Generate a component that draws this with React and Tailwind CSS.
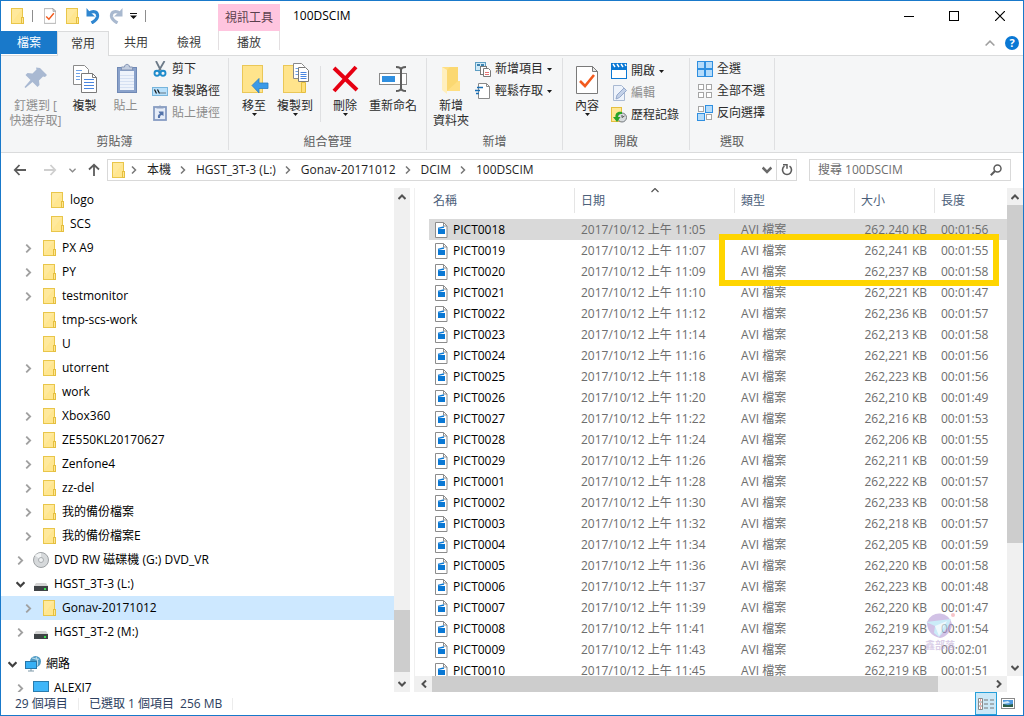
import React, { useState } from "react";

const FolderIcon = ({ className = "w-4 h-4" }) => (
  <svg className={className} viewBox="0 0 16 16" fill="none">
    <rect x="2.5" y="0.5" width="11" height="15" fill="#ffe68f" stroke="#e9c64a" />
    <path d="M3 1h10L3 14z" fill="#ffedb0" opacity=".4" />
    <rect x="12.5" y="9.5" width="2" height="6" fill="#ffe794" stroke="#e5bf3f" />
  </svg>
);

const PropsIcon = ({ className }) => (
  <svg className={className} viewBox="0 0 22 28" fill="none">
    <path d="M.5.5h16l5 5v22H.5z" fill="#fff" stroke="#7a7a7a" />
    <path d="M16.5.5v5h5z" fill="#e8e8e8" stroke="#7a7a7a" />
    <path d="M4 15l5 5 9-11" stroke="#f25a1d" strokeWidth="2.6" />
  </svg>
);

const UndoIcon = ({ color, flip }) => (
  <svg
    className={flip ? "w-4 h-4 -scale-x-100" : "w-4 h-4"}
    viewBox="0 0 16 16"
    fill="none"
  >
    <path d="M4 5C9 2 13 4 12.500 8.500 12 11.500 10 13 6.500 15" stroke={color} strokeWidth="3.2" />
    <path d="M1.500 0v8.500H10L7 5.800 4.500 3.500z" fill={color} />
  </svg>
);

const Chevron = ({ dir = "right", color = "#a0a0a0", width = 2, className = "w-2 h-2" }) => {
  const paths = {
    right: "M2 0.5L5.500 4 2 7.500",
    left: "M6 0.5L2.500 4 6 7.500",
    down: "M0.500 2L4 5.500 7.500 2",
    up: "M0.500 6L4 2.500 7.500 6",
  };
  return (
    <svg className={className} viewBox="0 0 8 8" fill="none">
      <path d={paths[dir]} stroke={color} strokeWidth={width} />
    </svg>
  );
};

const Arrow = ({ dir, color }) => {
  const paths = {
    left: "M13 7H2M6.500 2L1.800 7l4.700 5",
    right: "M1 7h11M7.500 2l4.700 5-4.700 5",
    up: "M7 13V2M2 6.500L7 1.800l5 4.700",
  };
  return (
    <svg className="w-3.5 h-3.5" viewBox="0 0 14 14" fill="none">
      <path d={paths[dir]} stroke={color} strokeWidth="1.8" />
    </svg>
  );
};

const Caret = () => (
  <svg className="w-[5px] h-[3px]" viewBox="0 0 5 3">
    <path d="M0 0h5L2.500 3z" fill="#1a1a1a" />
  </svg>
);

const PinIcon = () => (
  <svg className="w-8 h-8" viewBox="0 0 32 32">
    <path
      d="M20 5l7 7-2 2-2-.5-4 4 .5 4.500-2 2-5-5-7 6-1-1 6-7-5-5 2-2 5 .5 4-4-.5-2z"
      transform="translate(0 1)"
      fill="#a9b9d2"
    />
  </svg>
);

const CopyIcon = () => (
  <svg className="w-8 h-8" viewBox="0 0 32 32" fill="none">
    <path d="M4.500 3.500h11l4 4v15h-15z" fill="#fff" stroke="#8a8a8a" />
    <path d="M7 8.500h6M7 11.500h4M7 14.500h4M7 17.500h4" stroke="#6fa3e8" />
    <path d="M12.500 11.500h11l4 4v15h-15z" fill="#fff" stroke="#7a7a7a" />
    <path d="M23.500 11.500v4h4" stroke="#7a7a7a" />
    <path d="M15 17.500h10M15 20.500h10M15 23.500h10M15 26.500h10" stroke="#4a86e0" />
  </svg>
);

const PasteIcon = () => (
  <svg className="w-8 h-8" viewBox="0 0 32 32" fill="none">
    <rect x="7.500" y="5.500" width="19" height="25" fill="#8aa2cb" stroke="#7089b5" />
    <rect x="10" y="9" width="14" height="19" fill="#eef3fb" />
    <path d="M10 13.500h14M10 16.500h14M10 19.500h14M10 22.500h14M10 25.500h14" stroke="#d5e0f2" />
    <path d="M11.500 8V5h3c0-3.500 5-3.500 5 0h3v3z" fill="#c3cee0" stroke="#8495b5" />
  </svg>
);

const ScissorsIcon = () => (
  <svg className="w-4 h-4" viewBox="0 0 16 16" fill="none">
    <path d="M4 0l4.800 9.500M12.500 0L7 9.500" stroke="#6c7a88" strokeWidth="1.800" />
    <circle cx="5" cy="12.300" r="2.500" stroke="#1e8bcb" strokeWidth="1.900" />
    <circle cx="11" cy="12.300" r="2.500" stroke="#1e8bcb" strokeWidth="1.900" />
  </svg>
);

const CopyPathIcon = () => (
  <svg className="w-4 h-4" viewBox="0 0 16 16" fill="none">
    <rect x=".5" y="4.500" width="15" height="8" fill="#b8e0fb" stroke="#77b5dc" />
    <path d="M2.500 6.500l2 4M5.500 6.500l2 4" stroke="#111" strokeWidth="1.200" />
    <path d="M8.500 10h1M10.500 10h1M12.500 10h1" stroke="#111" strokeWidth="1.200" />
  </svg>
);

const PasteLinkIcon = () => (
  <svg className="w-4 h-4" viewBox="0 0 16 16" fill="none">
    <rect x="2" y="2" width="12" height="13" fill="#e6edf8" stroke="#879cc2" strokeWidth="1.800" />
    <path d="M4.500 3.500V1.500h2C7 0 9 0 9.500 1.500h2v2z" fill="#8fa1c2" />
    <path d="M6 13c-.5-3 .5-4 2-4L6.500 6.500h5V11L10 10c-1.500 0-2 1-2 3z" fill="#5574aa" />
  </svg>
);

const MoveToIcon = () => (
  <svg className="w-8 h-8" viewBox="0 0 32 32">
    <rect x="4.500" y="3.500" width="20" height="27" fill="#ffe48c" stroke="#eac758" />
    <path d="M14 23.500l7-7v4.500h9v5.500h-9v4.500z" fill="#3b9ae8" stroke="#2a7dc4" strokeWidth=".8" />
  </svg>
);

const CopyToIcon = () => (
  <svg className="w-8 h-8" viewBox="0 0 32 32" fill="none">
    <rect x="4.500" y="3.500" width="20" height="27" fill="#ffe48c" stroke="#eac758" />
    <path d="M22.500 20.500h4v10h-4z" fill="#ffdf76" stroke="#e5bf3f" />
    <path d="M14.500 1.500h8l3 3v12h-11z" fill="#fff" stroke="#8a8a8a" />
    <path d="M16.500 6.500h3M16.500 9.500h3M16.500 12.500h3" stroke="#6fa3e8" />
    <path d="M19.500 5.500h7l3 3v11h-10z" fill="#fff" stroke="#7a7a7a" />
    <path d="M21.500 10.500h6M21.500 12.500h6M21.500 14.500h6M21.500 16.500h6" stroke="#4a86e0" />
  </svg>
);

const DeleteIcon = () => (
  <svg className="w-8 h-8" viewBox="0 0 32 32" fill="none">
    <path d="M5 6l23 22M27 5L5 29" stroke="#e60012" strokeWidth="4" />
  </svg>
);

const RenameIcon = () => (
  <svg className="w-8 h-8" viewBox="0 0 32 32" fill="none">
    <rect x="2.500" y="11.500" width="27" height="11" fill="#fff" stroke="#8a8a8a" />
    <rect x="5" y="14" width="13" height="6" fill="#2f8fe0" />
    <path d="M19 5c3 0 5 1 5 3 0-2 2-3 5-3M24 7v20M19 29c3 0 5-1 5-3 0 2 2 3 5 3" stroke="#5e5e5e" strokeWidth="2" />
  </svg>
);

const NewFolderIcon = () => (
  <svg className="w-8 h-8" viewBox="0 0 32 32">
    <path d="M7 5h16v14h2v10H9z" fill="#ffdf82" />
    <path d="M7 5l5 3v24l-5-4z" fill="#ffefbd" />
    <path d="M12 8l3-3h8v14l-11 10z" fill="#fbd871" />
  </svg>
);

const NewItemIcon = () => (
  <svg className="w-4 h-4" viewBox="0 0 16 16" fill="none">
    <rect x=".5" y="1.500" width="10" height="8" fill="#cfeaf8" stroke="#5e9fc4" />
    <path d="M2 4h3M6 4h3" stroke="#3b82b0" strokeWidth="2" />
    <rect x="5.500" y="5.500" width="6" height="8" fill="#fff" stroke="#7a7a7a" />
    <path d="M8.500 7.500h5l2 2v6h-7z" fill="#fff" stroke="#7a7a7a" />
    <path d="M10 11.500h4M10 13.500h4" stroke="#e57373" />
  </svg>
);

const EasyAccessIcon = () => (
  <svg className="w-4 h-4" viewBox="0 0 16 16" fill="none">
    <path d="M3.500.5h8l3 3v12h-11z" fill="#fff" stroke="#8a8a8a" />
    <path d="M11.500.5v3h3" stroke="#8a8a8a" />
    <path d="M2 4.500h6M0 7.500h5M1 10.500h3" stroke="#1a6fb5" strokeWidth="1.400" />
  </svg>
);

const OpenIcon = () => (
  <svg className="w-4 h-4" viewBox="0 0 16 16" fill="none">
    <rect x=".5" y="5.500" width="15" height="10" fill="#fff" stroke="#0a78d4" />
    <path d="M0 0h16v7H0z" fill="#0a78d4" />
    <path d="M2 1l2 3M6 1l2 3M10 1l2 3M14 1l1 2" stroke="#fff" strokeWidth="1.400" />
  </svg>
);

const EditIcon = () => (
  <svg className="w-4 h-4" viewBox="0 0 16 16" fill="none">
    <path d="M2.500.5h8l3 3v12h-11z" fill="#eef3fb" stroke="#a9b9d2" />
    <path d="M5 14l1-4 7-7 2.500 2.500-7 7z" fill="#c3d1e8" stroke="#94a8cb" />
  </svg>
);

const HistoryIcon = () => (
  <svg className="w-4 h-4" viewBox="0 0 16 16" fill="none">
    <rect x=".5" y=".5" width="10" height="14" fill="#ffe794" stroke="#e5bf3f" />
    <circle cx="11" cy="10.500" r="4.500" fill="#d8dcdf" stroke="#757b80" />
    <path d="M11 8v2.500l2.500-1.500" stroke="#555" />
    <path d="M11 5C6 4 4 7 4.500 10H2l4 5 3.500-5H7c0-2 1-3.500 4-3z" fill="#28a428" />
  </svg>
);

const SelectGrid = ({ filled }) => (
  <svg className="w-4 h-4" viewBox="0 0 16 16">
    {[[0, 0], [1, 0], [0, 1], [1, 1]].map(([x, y], i) => (
      <rect
        key={i}
        x={x * 8 + (filled[i] ? 0.5 : 1.5)}
        y={y * 8 + (filled[i] ? 0.5 : 1.5)}
        width={filled[i] ? 7 : 5}
        height={filled[i] ? 7 : 5}
        fill={filled[i] ? "#b5dcfb" : "#fff"}
        stroke={filled[i] ? "#2f8fe0" : "#a5a5a5"}
      />
    ))}
  </svg>
);

const DiscIcon = () => (
  <svg className="w-4 h-4" viewBox="0 0 16 16" fill="none">
    <circle cx="8" cy="8" r="7.500" fill="#d6d9db" stroke="#9da1a4" />
    <path d="M8 8L2 3.500A7.500 7.500 0 0 1 8 1z" fill="#f2f4f5" />
    <circle cx="8" cy="8" r="2.500" fill="#eef0f1" stroke="#a9adb0" />
  </svg>
);

const DriveIcon = () => (
  <svg className="w-4 h-4" viewBox="0 0 16 16">
    <path d="M3 7h10l2 3H1z" fill="#d4d4d4" />
    <rect x="1" y="10" width="14" height="5" fill="#3f4346" />
    <rect x="11" y="12" width="2" height="2" fill="#35e04a" />
  </svg>
);

const NetworkIcon = () => (
  <svg className="w-4 h-4" viewBox="0 0 16 16" fill="none">
    <circle cx="10.500" cy="5.500" r="5.500" fill="#4f9ac4" />
    <path d="M7 2c3 0 4 2 7 1M11 1c2 3 2 6 1 9" stroke="#b8dcec" strokeWidth="1.200" />
    <rect x=".5" y="5.500" width="11" height="7" fill="#37b0f5" stroke="#2876a8" />
    <path d="M3 15h6M6 13v2" stroke="#7c98a8" />
  </svg>
);

const MonitorIcon = () => (
  <svg className="w-4 h-4" viewBox="0 0 16 16">
    <rect x=".5" y="1.500" width="15" height="10" fill="#3fb6f9" stroke="#2a7cae" />
    <path d="M6 12h4v2H6z" fill="#9db0bb" />
  </svg>
);

const VideoFileIcon = () => (
  <svg className="w-[13px] h-4 shrink-0" viewBox="0 0 13 16" fill="none">
    <path d="M.5.5h8l3.500 3.500v11.500H.5z" fill="#fff" stroke="#8c8c8c" />
    <path d="M8.500.5V4H12" stroke="#8c8c8c" />
    <rect x="3" y="7" width="7" height="5" fill="#0a78d4" />
    <path d="M3 6.300l6-1.300" stroke="#0a78d4" strokeWidth="1.300" />
  </svg>
);

const BigButton = ({ icon, lines, caret, disabled, className }) => (
  <button
    type="button"
    disabled={disabled}
    className={`flex flex-col items-center shrink-0 pt-1 leading-4 whitespace-nowrap ${
      disabled ? "text-[#8d8d8d]" : "text-[#2b2b2b]"
    } ${className}`}
  >
    {icon}
    <span className="mt-1">
      {lines.map((line) => (
        <span key={line} className="block h-[15px]">
          {line}
        </span>
      ))}
    </span>
    {caret && <Caret />}
  </button>
);

const SmallButton = ({ icon, label, caret, disabled }) => (
  <button
    type="button"
    disabled={disabled}
    className={`flex items-center gap-1 h-[22px] whitespace-nowrap ${
      disabled ? "text-[#8d8d8d]" : "text-[#2b2b2b]"
    }`}
  >
    {icon}
    <span>{label}</span>
    {caret && <Caret />}
  </button>
);

const RibbonGroup = ({ label, className, children }) => (
  <section
    className={`flex flex-col shrink-0 my-0.5 border-r border-[#dfe0e2] ${className}`}
  >
    <div className="flex flex-1 items-start">{children}</div>
    <h2 className="h-4 text-center leading-4 text-[#5c5c5c]">{label}</h2>
  </section>
);

const tree = [
  { level: 3, name: "logo", leaf: true },
  { level: 3, name: "SCS", leaf: true },
  { level: 2, name: "PX A9" },
  { level: 2, name: "PY" },
  { level: 2, name: "testmonitor" },
  { level: 2, name: "tmp-scs-work", leaf: true },
  { level: 2, name: "U", leaf: true },
  { level: 2, name: "utorrent" },
  { level: 2, name: "work", leaf: true },
  { level: 2, name: "Xbox360" },
  { level: 2, name: "ZE550KL20170627" },
  { level: 2, name: "Zenfone4" },
  { level: 2, name: "zz-del" },
  { level: 2, name: "我的備份檔案" },
  { level: 2, name: "我的備份檔案E" },
  { level: 1, name: "DVD RW 磁碟機 (G:) DVD_VR", icon: <DiscIcon /> },
  { level: 1, name: "HGST_3T-3 (L:)", icon: <DriveIcon />, open: true },
  { level: 2, name: "Gonav-20171012" },
  { level: 1, name: "HGST_3T-2 (M:)", icon: <DriveIcon /> },
  { level: 0, name: "網路", icon: <NetworkIcon />, open: true },
  { level: 1, name: "ALEXI7", icon: <MonitorIcon /> },
];

const indent = ["pl-[3px] mt-2", "pl-[11px]", "pl-[19px]", "pl-[27px]"];

const files = [
  ["PICT0018", "11:05", "262,240", "00:01:56"],
  ["PICT0019", "11:07", "262,241", "00:01:55"],
  ["PICT0020", "11:09", "262,237", "00:01:58"],
  ["PICT0021", "11:10", "262,221", "00:01:47"],
  ["PICT0022", "11:12", "262,236", "00:01:57"],
  ["PICT0023", "11:14", "262,213", "00:01:58"],
  ["PICT0024", "11:16", "262,221", "00:01:56"],
  ["PICT0025", "11:18", "262,223", "00:01:56"],
  ["PICT0026", "11:20", "262,210", "00:01:49"],
  ["PICT0027", "11:22", "262,216", "00:01:53"],
  ["PICT0028", "11:24", "262,206", "00:01:55"],
  ["PICT0029", "11:26", "262,211", "00:01:59"],
  ["PICT0001", "11:28", "262,222", "00:01:57"],
  ["PICT0002", "11:30", "262,233", "00:01:58"],
  ["PICT0003", "11:32", "262,218", "00:01:57"],
  ["PICT0004", "11:34", "262,205", "00:01:59"],
  ["PICT0005", "11:36", "262,220", "00:01:58"],
  ["PICT0006", "11:37", "262,223", "00:01:48"],
  ["PICT0007", "11:39", "262,220", "00:01:47"],
  ["PICT0008", "11:41", "262,219", "00:01:54"],
  ["PICT0009", "11:43", "262,237", "00:02:01"],
  ["PICT0010", "11:45", "262,219", "00:01:51"],
];

const TitleBar = () => (
  <header className="flex h-[30px] shrink-0">
    <div className="flex items-center w-[217px] pl-2">
      <FolderIcon />
      <span className="w-px h-3 ml-[7px] mr-[11px] bg-[#8d8d8d]" />
      <PropsIcon className="w-3 h-4" />
      <FolderIcon className="w-4 h-4 ml-2" />
      <button type="button" aria-label="復原" className="ml-[5px]">
        <UndoIcon color="#2f86d0" />
      </button>
      <button type="button" aria-label="取消復原" className="ml-[7px]">
        <UndoIcon color="#a9b9cf" flip />
      </button>
      <button type="button" aria-label="自訂快速存取工具列" className="ml-[6px]">
        <svg className="w-[7px] h-[6px]" viewBox="0 0 7 6">
          <path d="M0 0h7v1H0zM0 2.500h7L3.500 6z" fill="#111" />
        </svg>
      </button>
      <span className="w-px h-3 ml-2 bg-[#8d8d8d]" />
    </div>
    <div className="w-[62px] mt-[3px] pt-1.5 leading-4 text-center bg-[#ffc5df] text-[#5b3f4d]">
      視訊工具
    </div>
    <h1 className="flex-1 pl-[13px] leading-[30px] text-black">100DSCIM</h1>
    <div className="flex">
      <button type="button" aria-label="最小化" className="flex items-center justify-center w-[45px]">
        <span className="w-2.5 h-px bg-black" />
      </button>
      <button type="button" aria-label="最大化" className="flex items-center justify-center w-[45px]">
        <span className="w-2.5 h-2.5 border border-black" />
      </button>
      <button type="button" aria-label="關閉" className="flex items-center justify-center w-[47px]">
        <svg className="w-2.5 h-2.5" viewBox="0 0 10 10">
          <path d="M0 0l10 10M10 0L0 10" stroke="#000" strokeWidth="1.200" />
        </svg>
      </button>
    </div>
  </header>
);

const RibbonTabs = () => (
  <nav className="flex h-[25px] shrink-0 leading-4 text-[#3b3b3b] border-b border-[#dadbdc]">
    <button type="button" className="w-14 h-[23px] bg-[#1979ca] text-white">
      檔案
    </button>
    <button
      type="button"
      className="w-[52px] h-[25px] bg-[#f5f6f7] border border-b-0 border-[#dadbdc]"
    >
      常用
    </button>
    <button type="button" className="w-[54px]">
      共用
    </button>
    <button type="button" className="w-[52px] mr-[3px]">
      檢視
    </button>
    <button
      type="button"
      className="w-[62px] h-[19px] pt-1 border-x border-[#e3dfe1]"
    >
      播放
    </button>
    <div className="flex flex-1 items-center justify-end gap-2.5 pr-1">
      <button type="button" aria-label="最小化功能區" className="flex">
        <Chevron dir="up" width={1.3} className="w-2.5 h-2.5" />
      </button>
      <button
        type="button"
        aria-label="說明"
        className="w-3.5 h-3.5 rounded-full bg-[#0a78d4] text-white text-[11px] leading-[14px] font-bold"
      >
        ?
      </button>
    </div>
  </nav>
);

const Ribbon = () => (
  <div className="flex h-[97px] shrink-0 bg-[#f5f6f7] border-b border-[#dadbdc] overflow-hidden">
    <RibbonGroup label="剪貼簿" className="w-[228px]">
      <BigButton
        icon={<PinIcon />}
        lines={["釘選到 [", "快速存取]"]}
        disabled
        className="w-[69px]"
      />
      <BigButton icon={<CopyIcon />} lines={["複製"]} className="w-[29px]" />
      <BigButton icon={<PasteIcon />} lines={["貼上"]} disabled className="w-[53px]" />
      <div>
        <SmallButton icon={<ScissorsIcon />} label="剪下" />
        <SmallButton icon={<CopyPathIcon />} label="複製路徑" />
        <SmallButton icon={<PasteLinkIcon />} label="貼上捷徑" disabled />
      </div>
    </RibbonGroup>
    <RibbonGroup label="組合管理" className="w-[198px]">
      <BigButton icon={<MoveToIcon />} lines={["移至"]} caret className="w-8 ml-[9px]" />
      <BigButton icon={<CopyToIcon />} lines={["複製到"]} caret className="w-[50px]" />
      <span className="w-px h-14 mt-2 bg-[#dfe0e2]" />
      <BigButton icon={<DeleteIcon />} lines={["刪除"]} caret className="w-12" />
      <BigButton icon={<RenameIcon />} lines={["重新命名"]} className="w-12" />
    </RibbonGroup>
    <RibbonGroup label="新增" className="w-[136px]">
      <BigButton icon={<NewFolderIcon />} lines={["新增", "資料夾"]} className="w-12" />
      <div>
        <SmallButton icon={<NewItemIcon />} label="新增項目" caret />
        <SmallButton icon={<EasyAccessIcon />} label="輕鬆存取" caret />
      </div>
    </RibbonGroup>
    <RibbonGroup label="開啟" className="w-[127px]">
      <BigButton
        icon={
          <span className="flex items-end justify-center w-8 h-8">
            <PropsIcon className="w-[22px] h-7" />
          </span>
        }
        lines={["內容"]}
        caret
        className="w-12"
      />
      <div className="pt-0.5">
        <SmallButton icon={<OpenIcon />} label="開啟" caret />
        <SmallButton icon={<EditIcon />} label="編輯" disabled />
        <SmallButton icon={<HistoryIcon />} label="歷程記錄" />
      </div>
    </RibbonGroup>
    <RibbonGroup label="選取" className="w-[85px]">
      <div className="pl-[7px]">
        <SmallButton icon={<SelectGrid filled={[1, 1, 1, 1]} />} label="全選" />
        <SmallButton icon={<SelectGrid filled={[0, 0, 0, 0]} />} label="全部不選" />
        <SmallButton icon={<SelectGrid filled={[0, 1, 1, 0]} />} label="反向選擇" />
      </div>
    </RibbonGroup>
  </div>
);

const crumbs = ["本機", "HGST_3T-3 (L:)", "Gonav-20171012", "DCIM", "100DSCIM"];

const AddressBar = () => (
  <div className="flex items-center h-[35px] shrink-0 pl-3 pr-3 pb-px">
    <button type="button" aria-label="上一頁">
      <Arrow dir="left" color="#5c5c5c" />
    </button>
    <button type="button" aria-label="下一頁" className="ml-4">
      <Arrow dir="right" color="#cfcfcf" />
    </button>
    <button type="button" aria-label="最近的位置" className="ml-3">
      <Chevron dir="down" color="#8a8a8a" width={1.5} className="w-[7px] h-[7px]" />
    </button>
    <button type="button" aria-label="上移" className="ml-[11px]">
      <Arrow dir="up" color="#5c5c5c" />
    </button>
    <div className="flex flex-1 items-center h-[22px] ml-1.5 border border-[#d9d9d9] text-[#1f1f1f]">
      <FolderIcon className="w-4 h-4 ml-0.5" />
      <ol className="flex flex-1 items-center pl-1">
        {crumbs.map((name) => (
          <li key={name} className="flex items-center">
            <Chevron color="#777" width={1.5} className="w-2 h-2 mr-[9px]" />
            <a href="#" className="mr-2 whitespace-nowrap">
              {name}
            </a>
          </li>
        ))}
      </ol>
      <button type="button" aria-label="先前的位置" className="mr-1">
        <Chevron dir="down" color="#6a6a6a" className="w-2.5 h-2.5" />
      </button>
      <button
        type="button"
        aria-label="重新整理"
        className="flex items-center justify-center w-5 h-full border-l border-[#d9d9d9]"
      >
        <svg className="w-3 h-3" viewBox="0 0 12 12" fill="none">
          <path d="M8.500 2.200a4.500 4.500 0 1 1-5 0" stroke="#5c5c5c" strokeWidth="1.600" />
          <path d="M2 .8h4v4" stroke="#5c5c5c" strokeWidth="1.500" />
        </svg>
      </button>
    </div>
    <label className="flex items-center w-[202px] h-[22px] ml-3 pl-2 pr-2 border border-[#d9d9d9]">
      <input
        type="search"
        aria-label="搜尋"
        placeholder="搜尋 100DSCIM"
        className="flex-1 min-w-0 outline-none placeholder:text-[#6d6d6d]"
      />
      <svg className="w-3 h-3" viewBox="0 0 12 12" fill="none">
        <circle cx="7.500" cy="4.500" r="3.500" stroke="#5c5c5c" strokeWidth="1.500" />
        <path d="M5 7L.8 11.200" stroke="#5c5c5c" strokeWidth="2" />
      </svg>
    </label>
  </div>
);

const NavTree = ({ selected, onSelect }) => (
  <aside className="flex w-[409px] shrink-0">
    <ul className="flex-1 overflow-hidden text-black">
      {tree.map((item) => (
        <li key={item.name}>
          <button
            type="button"
            onClick={() => onSelect(item.name)}
            className={`flex items-center gap-[5px] w-full h-6 whitespace-nowrap ${
              indent[item.level]
            } ${selected === item.name ? "bg-[#cde8ff]" : ""}`}
          >
            <span className="flex justify-center w-4">
              {!item.leaf && (
                <Chevron
                  dir={item.open ? "down" : "right"}
                  color={item.open ? "#404040" : "#a0a0a0"}
                  width={item.open ? 2 : 1.6}
                  className="w-[9px] h-[9px]"
                />
              )}
            </span>
            {item.icon || <FolderIcon />}
            <span>{item.name}</span>
          </button>
        </li>
      ))}
    </ul>
    <div className="flex flex-col items-center w-4 bg-[#f0f0f0]">
      <span className="flex items-center h-[17px]">
        <Chevron dir="up" color="#505050" />
      </span>
      <span className="flex-1" />
      <span className="w-full h-[62px] bg-[#cdcdcd]" />
      <span className="flex items-center h-5 pt-1">
        <Chevron dir="down" color="#505050" />
      </span>
    </div>
  </aside>
);

const Watermark = () => (
  <div className="absolute top-[424px] right-[49px] flex flex-col items-center opacity-60">
    <svg className="w-9 h-7" viewBox="0 0 36 28">
      <path d="M5 10a13 13 0 0 1 25 2c0 7-6 13-12 14C9 24 5 18 5 10z" fill="#b59ad6" />
      <path d="M4 10l25-3-3 8-9 10-5-4 1-7z" fill="#a9e0f5" />
      <path d="M13 14l12-5-8 15z" fill="#fff" opacity=".7" />
      <circle cx="31" cy="3" r="2" fill="#f2a0a8" />
    </svg>
    <span className="text-[10px] leading-[10px] font-bold text-[#c3afd8]">鑫部落</span>
  </div>
);

const headers = ["名稱", "日期", "類型", "大小", "長度"];

const FileList = ({ selected, onSelect }) => (
  <main className="flex flex-col flex-1 min-w-0 ml-1 border-l border-[#f0f0f0]">
    <div className="flex flex-1 min-h-0">
      <div className="relative flex-1 overflow-hidden pl-[14px]">
        <table className="w-full table-fixed border-collapse text-[#6d6d6d] whitespace-nowrap">
          <colgroup>
            <col className="w-[146px]" />
            <col className="w-40" />
            <col className="w-[120px]" />
            <col className="w-20" />
            <col />
          </colgroup>
          <thead>
            <tr className="h-[31px] text-left text-[#4c607a]">
              {headers.map((name, i) => (
                <th key={name} className="p-0 pb-[6px] font-normal">
                  <div
                    className={`relative h-[25px] leading-[26px] ${
                      i < 4 ? "border-r border-[#e5e5e5]" : ""
                    } ${i === 0 ? "pl-1" : "pl-1.5"}`}
                  >
                    {name}
                    {i === 1 && (
                      <span className="absolute top-0 left-1/2 -ml-1 leading-none">
                        <Chevron dir="up" color="#555" width={1.2} className="w-2 h-2 -mt-0.5" />
                      </span>
                    )}
                  </div>
                </th>
              ))}
            </tr>
          </thead>
          <tbody>
            {files.map(([name, time, size, length]) => (
              <tr
                key={name}
                onClick={() => onSelect(name)}
                className={selected === name ? "h-[21px] bg-[#d9d9d9]" : "h-[21px]"}
              >
                <td className="p-0 pl-1.5 text-black">
                  <div className="flex items-center gap-[5px] h-[21px]">
                    <VideoFileIcon />
                    {name}
                  </div>
                </td>
                <td className="p-0 pl-1.5">2017/10/12 上午 {time}</td>
                <td className="p-0 pl-1.5">AVI 檔案</td>
                <td className="p-0 pr-2 text-right">{size} KB</td>
                <td className="p-0 pl-1.5">{length}</td>
              </tr>
            ))}
          </tbody>
        </table>
        <div className="absolute top-[46px] right-2 w-[280px] h-[52px] border-[6px] border-[#ffd500]" />
        <Watermark />
      </div>
      <div className="flex flex-col items-center w-4 bg-[#f0f0f0]">
        <span className="flex items-center h-[17px]">
          <Chevron dir="up" color="#505050" />
        </span>
        <span className="w-full h-[338px] bg-[#cdcdcd]" />
        <span className="flex-1" />
        <span className="flex items-center h-[17px]">
          <Chevron dir="down" color="#505050" />
        </span>
      </div>
    </div>
    <div className="flex items-center h-4 mr-4 bg-[#f0f0f0]">
      <span className="flex justify-center w-[17px]">
        <Chevron dir="left" color="#505050" />
      </span>
      <span className="w-[506px] h-full bg-[#cdcdcd]" />
      <span className="flex-1" />
      <span className="flex justify-center w-[17px]">
        <Chevron dir="right" color="#505050" />
      </span>
    </div>
  </main>
);

const StatusBar = () => (
  <footer className="flex items-center h-[23px] shrink-0 text-[#2c3e5e]">
    <span className="w-[78px] h-3 leading-3 pl-3.5 border-r border-[#ececec]">29 個項目</span>
    <span className="h-3 leading-3 pl-2.5">已選取 1 個項目</span>
    <span className="h-3 leading-3 pl-1.5 pr-2.5 border-r border-[#ececec]">256 MB</span>
    <span className="flex-1" />
    <button
      type="button"
      aria-label="詳細資料"
      className="flex items-center justify-center w-[22px] h-[23px] bg-[#cce8f7] border border-[#26a0da]"
    >
      <svg className="w-4 h-3" viewBox="0 0 16 12" fill="none">
        <path d="M.5.5h4v11h-4zM.5 4h4M.5 8h4" fill="#fff" stroke="#8a8a8a" />
        <path d="M2 2h1M2 6h1M2 10h1" stroke="#c33" />
        <path d="M6 2h4M12 2h4M6 6h4M12 6h4M6 10h4M12 10h4" stroke="#777" />
      </svg>
    </button>
    <button type="button" aria-label="大圖示" className="ml-1 mr-2">
      <svg className="w-3.5 h-3" viewBox="0 0 14 12">
        <rect x=".5" y=".5" width="13" height="10" fill="#fff" stroke="#8a8a8a" />
        <rect x="2" y="2" width="10" height="7" fill="#4f9be0" />
        <path d="M2 9V6l5 1 5-1v3z" fill="#2c5f4a" />
        <path d="M2 4l5-1 2 2-7 1z" fill="#cfe8fa" />
      </svg>
    </button>
  </footer>
);

const App = () => {
  const [folder, setFolder] = useState("Gonav-20171012");
  const [file, setFile] = useState("PICT0018");

  return (
    <div className="flex flex-col h-screen overflow-hidden bg-white border border-[#1979ca] text-xs font-['Open_Sans','Noto_Sans_CJK_TC',sans-serif]">
      <TitleBar />
      <RibbonTabs />
      <Ribbon />
      <AddressBar />
      <div className="flex flex-1 min-h-0">
        <NavTree selected={folder} onSelect={setFolder} />
        <FileList selected={file} onSelect={setFile} />
      </div>
      <StatusBar />
    </div>
  );
};

export default App;
